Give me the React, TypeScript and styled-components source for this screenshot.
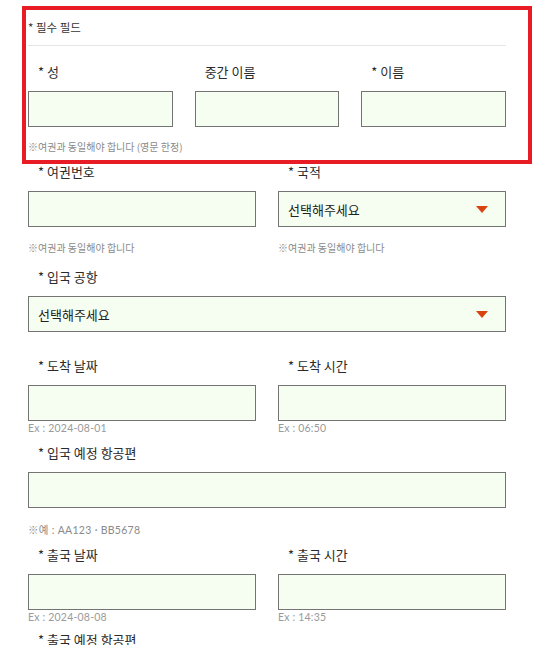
import styled, { createGlobalStyle } from "styled-components";

const GlobalStyle = createGlobalStyle`
  body {
    margin: 0;
    background: #fff;
    font-family: "Noto Sans CJK KR", "Noto Sans", sans-serif;
    color: #333;
  }
`;

const Page = styled.div`
  width: 478px;
  padding-left: 28px;
  padding-top: 6px;
`;

const Highlight = styled.section`
  margin: 0 -26px 0 -6px;
  padding: 9px 22px 6px 2px;
  border: 4px solid #e81c24;
`;

const RequiredNote = styled.div`
  font-size: 11.5px;
  line-height: 16px;
  color: #333;
`;

const Divider = styled.hr`
  border: 0;
  border-top: 1px solid #e4e4e4;
  margin: 10px 0 0;
`;

const Row = styled.div<{ $cols: number; $top?: number }>`
  display: grid;
  grid-template-columns: repeat(${(p) => p.$cols}, 1fr);
  column-gap: 22px;
  margin-top: ${(p) => p.$top ?? 0}px;
`;

const Field = styled.div`
  display: flex;
  flex-direction: column;
  min-width: 0;
`;

const Label = styled.label`
  font-size: 13px;
  line-height: 16px;
  padding-left: 10px;
  margin-bottom: 11px;
  color: #2b2b2b;
`;

const TextInput = styled.input`
  box-sizing: border-box;
  height: 36px;
  width: 100%;
  border: 1px solid #747474;
  background: #f6fdf1;
  outline: none;
  padding: 0 10px;
  font-size: 13px;
`;

const Select = styled.div`
  box-sizing: border-box;
  height: 36px;
  border: 1px solid #747474;
  background: #f6fdf1;
  display: flex;
  align-items: center;
  justify-content: space-between;
  padding: 0 17px 0 9px;
  font-size: 13px;
  color: #222;
`;

const Caret = styled.span`
  width: 0;
  height: 0;
  border-left: 6px solid transparent;
  border-right: 6px solid transparent;
  border-top: 7px solid #d9430f;
`;

const Note = styled.div<{ $top?: number }>`
  font-size: 10px;
  line-height: 14px;
  color: #8a8a8a;
  margin-top: ${(p) => p.$top ?? 0}px;
`;

const Example = styled.div`
  font-family: "Lato", "Noto Sans", sans-serif;
  font-size: 10.5px;
  letter-spacing: 0.2px;
  line-height: 14px;
  color: #9a9a9a;
`;

const FlightNote = styled(Note)`
  font-family: "Lato", "Noto Sans CJK KR", sans-serif;
  font-size: 10.5px;
  letter-spacing: 0.3px;
`;

function InputField({ label, example }: { label: string; example?: string }) {
  return (
    <Field>
      <Label>{label}</Label>
      <TextInput />
      {example && <Example>{example}</Example>}
    </Field>
  );
}

function SelectField({ label }: { label: string }) {
  return (
    <Field>
      <Label>{label}</Label>
      <Select>
        선택해주세요
        <Caret />
      </Select>
    </Field>
  );
}

export default function App() {
  return (
    <>
      <GlobalStyle />
      <Page>
        <Highlight>
          <RequiredNote>* 필수 필드</RequiredNote>
          <Divider />
          <Row $cols={3} $top={18}>
            <InputField label="* 성" />
            <InputField label="중간 이름" />
            <InputField label="* 이름" />
          </Row>
          <Note $top={13}>※여권과 동일해야 합니다 (영문 한정)</Note>
        </Highlight>

        <Row $cols={2}>
          <Field>
            <InputField label="* 여권번호" />
            <Note $top={14}>※여권과 동일해야 합니다</Note>
          </Field>
          <Field>
            <SelectField label="* 국적" />
            <Note $top={14}>※여권과 동일해야 합니다</Note>
          </Field>
        </Row>

        <Row $cols={1} $top={14}>
          <SelectField label="* 입국 공항" />
        </Row>

        <Row $cols={2} $top={26}>
          <InputField label="* 도착 날짜" example="Ex : 2024-08-01" />
          <InputField label="* 도착 시간" example="Ex : 06:50" />
        </Row>

        <Row $cols={1} $top={10}>
          <InputField label="* 입국 예정 항공편" />
        </Row>
        <FlightNote $top={15}>※예 : AA123 · BB5678</FlightNote>

        <Row $cols={2} $top={10}>
          <InputField label="* 출국 날짜" example="Ex : 2024-08-08" />
          <InputField label="* 출국 시간" example="Ex : 14:35" />
        </Row>

        <Row $cols={1} $top={8}>
          <InputField label="* 출국 예정 항공편" />
        </Row>
      </Page>
    </>
  );
}
